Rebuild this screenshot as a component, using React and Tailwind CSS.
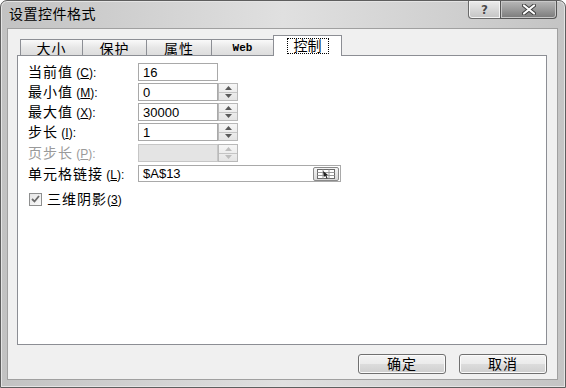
const F = "font-['Liberation_Sans','Noto_Sans_CJK_SC',sans-serif]";

function Spin({ disabled }) {
  const c = disabled ? "#bdbdbd" : "#5a5a5a";
  return (
    <div className="w-[20px] h-full flex flex-col border border-[#b9b9b9] bg-[linear-gradient(180deg,#f6f6f6,#e4e4e4)]">
      <div className="flex-1 flex items-center justify-center border-b border-[#c4c4c4]">
        <svg width="7" height="4" viewBox="0 0 7 4"><path d="M0 4 L3.5 0 L7 4 Z" fill={c} /></svg>
      </div>
      <div className="flex-1 flex items-center justify-center">
        <svg width="7" height="4" viewBox="0 0 7 4"><path d="M0 0 L3.5 4 L7 0 Z" fill={c} /></svg>
      </div>
    </div>
  );
}

function Label({ text, k, disabled }) {
  return (
    <div className={`w-[110px] text-[14px] leading-none tracking-[1px] ${disabled ? "text-[#9a9a9a]" : "text-black"}`}>
      {text}
      <span className="text-[12px] tracking-normal"> (<span className="underline">{k}</span>):</span>
    </div>
  );
}

function Row({ text, k, value, spin, disabled, mt }) {
  return (
    <div className={`flex items-center h-[18px] ${mt}`}>
      <Label text={text} k={k} disabled={disabled} />
      <div className="flex h-full">
        <div className={`w-[80px] h-full border ${disabled ? "border-[#c6c6c6] bg-[#e4e4e4]" : "border-[#a9a9a9] bg-white"} flex items-center pl-[4px] text-[13px] leading-none text-black`}>
          {value}
        </div>
        {spin && <Spin disabled={disabled} />}
      </div>
    </div>
  );
}

function Tab({ label, w, selected, first, mono }) {
  return (
    <div
      className={`${w} ${first ? "" : "-ml-px"} ${
        selected
          ? "relative z-10 h-[21px] bg-white"
          : "h-[17px] bg-[linear-gradient(180deg,#fafafa,#e6e6e6_50%,#dcdcdc)]"
      } border border-[#8c8e94] border-b-0 flex items-center justify-center`}
    >
      {selected ? (
        <span className="border border-dotted border-black px-[6px] h-[16px] flex items-center text-[14px] leading-none">{label}</span>
      ) : mono ? (
        <span className="font-['Liberation_Mono',monospace] font-bold text-[11px] leading-none">{label}</span>
      ) : (
        <span className="text-[14px] leading-none tracking-[1px] mt-[1px]">{label}</span>
      )}
    </div>
  );
}

function Btn({ children }) {
  return (
    <div className="w-[88px] h-[20px] rounded-[3px] border border-[#707070] bg-[linear-gradient(180deg,#f3f3f3,#ebebeb_48%,#dcdcdc_52%,#cfcfcf)] shadow-[inset_0_0_0_1px_#fbfbfb] flex items-center justify-center text-[14px] leading-none tracking-[1px] text-black">
      {children}
    </div>
  );
}

export default function App() {
  return (
    <div className={`w-[566px] h-[388px] overflow-hidden bg-white ${F}`}>
      <div className="w-full h-full flex flex-col rounded-t-[7px] border border-[#5e5e5e] bg-[linear-gradient(90deg,#c2c2c2,#d4d4d4_30%,#e0e0e0_50%,#d2d2d2_75%,#c4c4c4)] shadow-[inset_0_0_0_1px_#e4e4e4]">
        <div className="h-[27px] flex items-start">
          <div className="pl-[8px] pt-[6px] text-[14px] leading-none text-black tracking-[0.5px]">设置控件格式</div>
          <div className="ml-auto mr-[8px] flex h-[18px]">
            <div className="w-[33px] h-full border border-[#6a6a6a] border-t-0 rounded-bl-[4px] bg-[linear-gradient(180deg,#ececec,#d8d8d8_50%,#c4c4c4)] shadow-[inset_0_0_0_1px_#f4f4f4] flex items-center justify-center">
              <span className="font-['DejaVu_Sans',sans-serif] font-bold text-[12px] leading-none text-[#4a4a4a] [text-shadow:0_0_1px_#fff]">?</span>
            </div>
            <div className="w-[57px] h-full -ml-px border border-[#555] border-t-0 rounded-br-[4px] bg-[linear-gradient(180deg,#b8b8b8,#9a9a9a_50%,#7a7a7a)] shadow-[inset_0_0_0_1px_#c8c8c8] flex items-center justify-center">
              <svg width="14" height="11" viewBox="0 0 14 11">
                <path d="M2 1.5 L12 9.5 M12 1.5 L2 9.5" stroke="#3c3c3c" strokeWidth="4" strokeLinecap="round" />
                <path d="M2 1.5 L12 9.5 M12 1.5 L2 9.5" stroke="#ffffff" strokeWidth="2.2" strokeLinecap="round" />
              </svg>
            </div>
          </div>
        </div>

        <div className="flex-1 ml-[6px] mr-[7px] mb-[7px] bg-[#f0f0f0] border border-[#a0a0a0] flex flex-col">
          <div className="ml-[9px] mr-[10px] mt-[7px] flex flex-col">
            <div className="h-[20px] flex items-end pl-[3px]">
              <Tab label="大小" w="w-[63px]" first />
              <Tab label="保护" w="w-[65px]" />
              <Tab label="属性" w="w-[66px]" />
              <Tab label="Web" w="w-[63px]" mono />
              <Tab label="控制" w="w-[69px]" selected />
            </div>
            <div className="-mt-px h-[290px] bg-white border border-[#8c8e94] flex flex-col pl-[10px] pt-[7px]">
              <Row text="当前值" k="C" value="16" mt="" />
              <Row text="最小值" k="M" value="0" spin mt="mt-[2px]" />
              <Row text="最大值" k="X" value="30000" spin mt="mt-[2px]" />
              <Row text="步长" k="I" value="1" spin mt="mt-[2px]" />
              <Row text="页步长" k="P" value="" spin disabled mt="mt-[3px]" />
              <div className="flex items-center h-[17px] mt-[3px]">
                <Label text="单元格链接" k="L" />
                <div className="w-[203px] h-full border border-[#a9a9a9] bg-white flex items-center pl-[4px] pr-[1px] text-[13px] leading-none text-black">
                  <span className="flex-1">$A$13</span>
                  <div className="w-[26px] h-[14px] border border-[#8a8a8a] rounded-[2px] bg-[linear-gradient(180deg,#f4f4f4,#d8d8d8)] flex items-center justify-center">
                    <svg width="18" height="10" viewBox="0 0 18 10">
                      <rect x="0.5" y="0.5" width="17" height="9" fill="#fff" stroke="#6a6a6a" />
                      <path d="M0.5 3.5 H17.5 M0.5 6.5 H17.5 M6 0.5 V9.5 M12 0.5 V9.5" stroke="#9a9a9a" strokeWidth="1" />
                      <path d="M6 2 L11 6 L9.3 6.3 L10.5 9 L9.5 9.4 L8.3 6.7 L7 8 Z" fill="#222" />
                    </svg>
                  </div>
                </div>
              </div>
              <div className="flex items-center mt-[10px] pl-[1px]">
                <div className="w-[13px] h-[13px] border border-[#8e8f8f] bg-[linear-gradient(135deg,#e6e6e6,#fafafa)] flex items-center justify-center">
                  <svg width="9" height="8" viewBox="0 0 9 8">
                    <path d="M1 4 L3.5 6.5 L8 1" stroke="#6a6a6a" strokeWidth="1.8" fill="none" />
                  </svg>
                </div>
                <span className="ml-[5px] text-[14px] leading-none tracking-[1px] text-black">
                  三维阴影<span className="text-[12px] tracking-normal">(<span className="underline">3</span>)</span>
                </span>
              </div>
            </div>
            <div className="mt-[9px] flex justify-end gap-[13px]">
              <Btn>确定</Btn>
              <Btn>取消</Btn>
            </div>
          </div>
        </div>
      </div>
    </div>
  );
}
